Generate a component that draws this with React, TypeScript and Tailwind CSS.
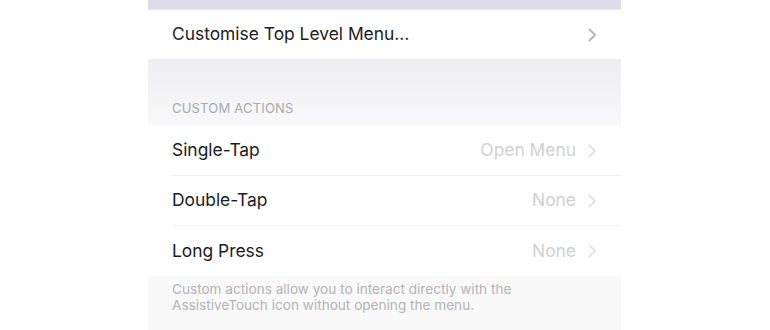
import React from 'react';

const Chevron = ({ color }: { color: string }) => (
  <svg width="9" height="14" viewBox="0 0 9 14" fill="none" className="shrink-0">
    <polyline points="1.5,1.5 7,7 1.5,12.5" stroke={color} strokeWidth="1.8" strokeLinecap="round" strokeLinejoin="round" />
  </svg>
);

const actions = [
  { label: 'Single-Tap', value: 'Open Menu' },
  { label: 'Double-Tap', value: 'None' },
  { label: 'Long Press', value: 'None' },
];

export default function App() {
  return (
    <div className="w-[770px] h-[330px] bg-white overflow-hidden flex justify-center font-['Inter',sans-serif]">
      <div className="w-[473px] ml-[-1px] flex flex-col">
        {/* previous group edge */}
        <div className="h-[10px] bg-[#dddce9] border-b border-[#e4e4ec]" />

        <div className="h-[49px] bg-white flex items-center pl-[24px] pr-[24px]">
          <span className="flex-1 text-[17.4px] text-[#1c1c1e]">Customise Top Level Menu...</span>
          <Chevron color="#b4b4b8" />
        </div>

        <div className="h-[67px] bg-gradient-to-b from-[#ededf2] to-[#f9f9fa] flex items-end pl-[24px] pb-[8px]">
          <span className="text-[13px] text-[#a9a9ae] tracking-[0.2px]">CUSTOM ACTIONS</span>
        </div>

        {actions.map((a, i) => (
          <div key={a.label} className="h-[50px] bg-white pl-[24px]">
            <div className={`h-full flex items-center pr-[24px] ${i < actions.length - 1 ? 'border-b border-[#f1f1f3]' : ''}`}>
              <span className="flex-1 text-[17.4px] text-[#1c1c1e]">{a.label}</span>
              <span className="text-[17.4px] text-[#d0d0d3] mr-[12px]">{a.value}</span>
              <Chevron color="#e2e2e5" />
            </div>
          </div>
        ))}

        <div className="flex-1 bg-[#f9f9f9] pl-[24px] pt-[5px]">
          <p className="text-[13.6px] leading-[16px] text-[#b3b3b6]">
            Custom actions allow you to interact directly with the
            <br />
            AssistiveTouch icon without opening the menu.
          </p>
        </div>
      </div>
    </div>
  );
}
